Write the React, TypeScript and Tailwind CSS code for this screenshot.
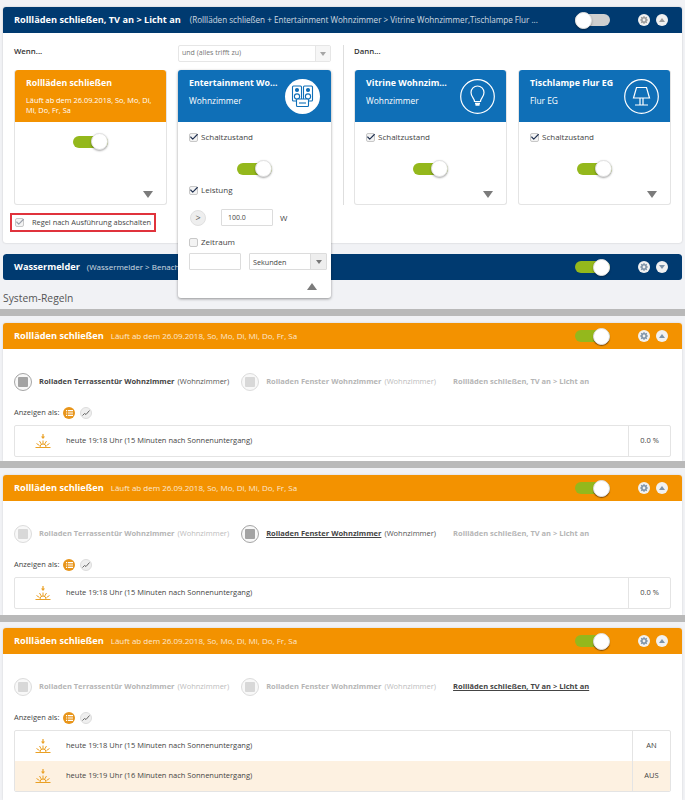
import React from 'react';
import { Check } from 'lucide-react';

const Toggle = ({ on = true, dark = false }: { on?: boolean; dark?: boolean }) => (
  <div className="relative w-[35px] h-[15px] flex items-center">
    <div className={`w-full h-[12px] rounded-full ${on ? 'bg-[#94b81c]' : 'bg-[#cfcfcf]'}`} />
    <div
      className={`absolute top-[-1px] ${on ? 'right-0' : 'left-0'} w-[17px] h-[17px] rounded-full bg-white border border-[#e2e2e2] ${dark ? 'shadow-[0_1px_1px_rgba(60,30,0,0.6)]' : 'shadow-[0_1px_2px_rgba(0,0,0,0.35)]'}`}
    />
  </div>
);

const Gear = ({ color }: { color: string }) => (
  <div className="w-[12px] h-[12px] rounded-full bg-[#f1f1f1] flex items-center justify-center">
    <svg width="8" height="8" viewBox="0 0 8 8">
      <circle cx="4" cy="4" r="2.2" fill="none" stroke={color} strokeWidth="1.6" />
      <g stroke={color} strokeWidth="1.1">
        <path d="M4 0v1.4M4 6.6V8M0 4h1.4M6.6 4H8M1.2 1.2l1 1M5.8 5.8l1 1M1.2 6.8l1-1M5.8 2.2l1-1" />
      </g>
    </svg>
  </div>
);

const Arrow = ({ up = true, color }: { up?: boolean; color: string }) => (
  <div className="w-[12px] h-[12px] rounded-full bg-[#f1f1f1] flex items-center justify-center">
    <svg width="6" height="4" viewBox="0 0 6 4">
      <path d={up ? 'M3 0l3 4H0z' : 'M3 4L0 0h6z'} fill={color} />
    </svg>
  </div>
);

const Caret = ({ up = false }: { up?: boolean }) => (
  <svg width="10" height="7" viewBox="0 0 10 7">
    <path d={up ? 'M5 0l5 7H0z' : 'M5 7L0 0h10z'} fill="#7b7b7b" />
  </svg>
);

const SelectArrow = ({ color }: { color: string }) => (
  <svg width="6" height="4" viewBox="0 0 6 4">
    <path d="M3 4L0 0h6z" fill={color} />
  </svg>
);

const Box = ({ checked = true, faded = false }: { checked?: boolean; faded?: boolean }) => (
  <div className="relative w-[9px] h-[9px] rounded-[2px] border border-[#c8c8c8] bg-[#f3f3f3] shrink-0">
    {checked && (
      <Check
        size={10}
        strokeWidth={2.6}
        className={`absolute left-[-1px] top-[-2px] ${faded ? 'text-[#9aa0aa]' : 'text-[#1f3050]'}`}
      />
    )}
  </div>
);

const PanelHead = ({
  bg,
  title,
  sub,
  subClass = 'ml-[7px] text-[8px]',
  on = true,
  up = true,
  iconColor,
  shadow = false,
}: {
  bg: string;
  title: string;
  sub: string;
  subClass?: string;
  on?: boolean;
  up?: boolean;
  iconColor: string;
  shadow?: boolean;
}) => (
  <div className={`h-[26px] rounded-t-[3px] flex items-center pl-[11px] pr-[14px] text-white ${bg}`}>
    <span className="text-[9.2px] font-bold whitespace-nowrap">{title}</span>
    <span className={`flex-1 opacity-80 whitespace-nowrap ${subClass}`}>{sub}</span>
    <Toggle on={on} dark={shadow} />
    <div className="ml-[28px] flex gap-[6px]">
      <Gear color={iconColor} />
      <Arrow up={up} color={iconColor} />
    </div>
  </div>
);

const LightIcon = () => (
  <svg width="35" height="35" viewBox="0 0 35 35" fill="none" stroke="white" strokeWidth="1.2">
    <circle cx="17.5" cy="17.5" r="16.8" />
    <path d="M14.5 22.5c0-3-3.5-4.5-3.500-9a6.500 6.500 0 0 1 13 0c0 4.500-3.500 6-3.500 9z" />
    <path d="M15 24.500h5M15.500 26h4" strokeWidth="1.500" />
  </svg>
);

const LampIcon = () => (
  <svg width="35" height="35" viewBox="0 0 35 35" fill="none" stroke="white" strokeWidth="1.2">
    <circle cx="17.5" cy="17.5" r="16.8" />
    <path d="M12.500 8.500h10l3 10.500h-16z" />
    <path d="M16 19v6.500M19 19v6.500M11 26h13" />
  </svg>
);

const AvIcon = () => (
  <div className="w-[35px] h-[35px] rounded-full bg-white flex items-center justify-center">
    <svg width="25" height="25" viewBox="0 0 25 25" fill="none" stroke="#0f6fb7" strokeWidth="1.100">
      <rect x="2.500" y="2" width="9" height="15" rx="1" />
      <rect x="13.500" y="2" width="9" height="15" rx="1" />
      <circle cx="7" cy="6" r="1.500" fill="#0f6fb7" />
      <circle cx="18" cy="6" r="1.500" fill="#0f6fb7" />
      <circle cx="7" cy="12.500" r="2.600" />
      <circle cx="18" cy="12.500" r="2.600" />
      <rect x="6.500" y="15" width="12" height="7.500" rx="1" fill="white" />
      <path d="M9 19h7" />
    </svg>
  </div>
);

const CardHead = ({
  bg,
  title,
  sub,
  icon,
}: {
  bg: string;
  title: string;
  sub: React.ReactNode;
  icon?: React.ReactNode;
}) => (
  <div className={`h-[52px] rounded-t-[3px] pl-[11px] pr-[11px] pt-[5px] text-white relative ${bg}`}>
    <div className="text-[8.8px] font-bold leading-[16px] whitespace-nowrap">{title}</div>
    {sub}
    {icon && <div className="absolute right-[11px] top-[9px]">{icon}</div>}
  </div>
);

const RoomLine = ({ text }: { text: string }) => (
  <div className="mt-[4px] text-[8.4px] font-medium leading-[12px]">{text}</div>
);

const ActorCard = ({ title, room, icon }: { title: string; room: string; icon: React.ReactNode }) => (
  <div className="w-[153px] h-[135px] rounded-[3px] bg-white border border-[#e4e4e4] border-t-0 flex flex-col">
    <CardHead bg="bg-[#0f6fb7]" title={title} sub={<RoomLine text={room} />} icon={icon} />
    <div className="flex-1 px-[11px] pt-[9px] relative">
      <div className="flex items-center gap-[3px] text-[8px] text-[#444] leading-[12px]">
        <Box /> Schaltzustand
      </div>
      <div className="flex justify-center mt-[18px]">
        <Toggle />
      </div>
      <div className="absolute right-[13px] bottom-[6px] flex">
        <Caret />
      </div>
    </div>
  </div>
);

const RuleOne = () => (
  <div className="rounded-[3px] bg-white shadow-[0_0_2px_rgba(0,0,0,0.2)]">
    <PanelHead
      bg="bg-[#003a70]"
      title="Rollläden schließen, TV an > Licht an"
      sub="(Rollläden schließen + Entertainment Wohnzimmer > Vitrine Wohnzimmer,Tischlampe Flur ..."
      subClass="ml-[9px] text-[8.1px]"
      on={false}
      iconColor="#9b9b9b"
    />
    <div className="h-[210px] px-[11px] pt-[12px] flex">
      <div className="w-[153px]">
        <div className="h-[25px] text-[7.8px] font-semibold text-[#333] leading-[12px]">Wenn...</div>
        <div className="h-[135px] rounded-[3px] bg-white border border-[#e4e4e4] border-t-0 flex flex-col">
          <CardHead
            bg="bg-[#f39200]"
            title="Rollläden schließen"
            sub={
              <div className="mt-[4px] text-[7.4px] leading-[10px] font-medium whitespace-nowrap">
                Läuft ab dem 26.09.2018, So, Mo, Di,
                <br />
                Mi, Do, Fr, Sa
              </div>
            }
          />
          <div className="flex-1 relative pt-[12px] flex justify-center">
            <Toggle />
            <div className="absolute right-[13px] bottom-[6px] flex">
              <Caret />
            </div>
          </div>
        </div>
        <div className="-ml-[4px] mt-[8px] w-[146px] h-[19px] border-2 border-[#e0333c] flex items-center pl-[3px] gap-[8px] text-[7.4px] text-[#444] whitespace-nowrap">
          <Box faded /> Regel nach Ausführung abschalten
        </div>
      </div>

      <div className="ml-[11px] w-[153px] relative">
        <div className="h-[17px] mb-[8px] rounded-[2px] border border-[#e6e6e6] flex items-center justify-between pl-[3px] text-[7px] text-[#777]">
          und (alles trifft zu)
          <div className="w-[15px] h-full border-l border-[#e6e6e6] bg-[#f6f6f6] flex items-center justify-center">
            <SelectArrow color="#a5a5a5" />
          </div>
        </div>
        <div className="absolute z-10 top-[25px] left-0 w-[153px] h-[228px] rounded-[3px] bg-white shadow-[0_1px_3px_rgba(0,0,0,0.4)]">
          <CardHead
            bg="bg-[#0f6fb7]"
            title="Entertainment Wo..."
            sub={<RoomLine text="Wohnzimmer" />}
            icon={<AvIcon />}
          />
          <div className="px-[11px] pt-[9px] text-[8px] text-[#444] leading-[12px]">
            <div className="flex items-center gap-[3px]">
              <Box /> Schaltzustand
            </div>
            <div className="flex justify-center mt-[18px]">
              <Toggle />
            </div>
            <div className="flex items-center gap-[3px] mt-[8px]">
              <Box /> Leistung
            </div>
            <div className="flex items-center mt-[13px] h-[17px]">
              <div className="ml-px w-[16px] h-[16px] rounded-full bg-[#eeeeee] border border-[#e0e0e0] flex items-center justify-center text-[9px] text-[#555]">
                &gt;
              </div>
              <div className="ml-[15px] w-[52px] h-[17px] border border-[#dcdcdc] rounded-[1px] pl-[6px] text-[7px] text-[#444] flex items-center">
                100.0
              </div>
              <span className="ml-[7px] text-[8px]">W</span>
            </div>
            <div className="flex items-center gap-[3px] mt-[10px]">
              <Box checked={false} /> Zeitraum
            </div>
            <div className="flex items-center mt-[5px]">
              <div className="shrink-0 w-[52px] h-[17px] border border-[#dcdcdc] rounded-[1px]" />
              <div className="shrink-0 ml-[8px] w-[78px] h-[17px] border border-[#dcdcdc] rounded-[1px] flex items-center justify-between pl-[3px] text-[7.200px]">
                Sekunden
                <div className="w-[16px] h-full border-l border-[#dcdcdc] bg-[#eeeeee] flex items-center justify-center">
                  <SelectArrow color="#777777" />
                </div>
              </div>
            </div>
            <div className="flex justify-end mt-[13px] pr-[3px]">
              <Caret up />
            </div>
          </div>
        </div>
      </div>

      <div className="ml-[12px] w-px h-[160px] bg-[#dedede]" />

      <div className="ml-[10px]">
        <div className="h-[25px] text-[7.8px] font-semibold text-[#333] leading-[12px]">Dann...</div>
        <div className="flex gap-[11px]">
          <ActorCard title="Vitrine Wohnzim..." room="Wohnzimmer" icon={<LightIcon />} />
          <ActorCard title="Tischlampe Flur EG" room="Flur EG" icon={<LampIcon />} />
        </div>
      </div>
    </div>
  </div>
);

const Blind = ({ active }: { active: boolean }) => (
  <div
    className={`w-[18px] h-[18px] rounded-full flex items-center justify-center border ${active ? 'border-[#a5a5a5] bg-[#f8f8f8]' : 'border-[#dcdcdc] bg-[#f8f8f8]'}`}
  >
    <div className={`w-[10px] h-[10px] rounded-[1px] ${active ? 'bg-[#a3a3a3]' : 'bg-[#d8d8d8]'}`} />
  </div>
);

const DeviceRow = ({ active }: { active: number }) => {
  const strong = 'font-bold text-[#444] text-[7.5px]';
  const faint = 'font-bold text-[#b5b5b5] text-[7.5px]';
  const tail = (on: boolean) => `font-normal ${on ? 'text-[#555]' : 'text-[#bcbcbc]'}`;
  return (
    <div className="flex items-center h-[18px] whitespace-nowrap">
      <Blind active={active === 0} />
      <span className={`ml-[7px] ${active === 0 ? strong : faint}`}>Rolladen Terrassentür Wohnzimmer</span>
      <span className={`ml-[3px] text-[7.5px] ${tail(active === 0)}`}>(Wohnzimmer)</span>
      <div className="w-[12px]" />
      <Blind active={active === 1} />
      <span className={`ml-[7px] ${active === 1 ? `${strong} underline` : faint}`}>Rolladen Fenster Wohnzimmer</span>
      <span className={`ml-[3px] text-[7.5px] ${tail(active === 1)}`}>(Wohnzimmer)</span>
      <span className={`ml-[17px] ${active === 2 ? `${strong} underline` : faint}`}>
        Rollläden schließen, TV an &gt; Licht an
      </span>
    </div>
  );
};

const Sunset = () => (
  <svg width="16" height="15" viewBox="0 0 16 15" fill="none" stroke="#eaa024" strokeWidth="1">
    <path d="M8 0v3" strokeWidth="1.200" />
    <path d="M6 2.500L8 5l2-2.500z" fill="#eaa024" stroke="none" />
    <path d="M8 6.500v3.500M4.500 7l1.800 3M11.500 7l-1.800 3M1.500 9.500l3 2M14.500 9.500l-3 2" />
    <path d="M5 13a3 3 0 0 1 6 0" />
    <path d="M0.500 13.500h15" strokeWidth="1.200" />
  </svg>
);

const ListRow = ({ text, value, width, tint }: { text: string; value: string; width: string; tint?: boolean }) => (
  <div className={`h-[30px] flex items-center text-[7.500px] text-[#444] ${tint ? 'bg-[#fdf1e1]' : ''}`}>
    <div className="w-[51px] flex justify-center pl-[4px]">
      <Sunset />
    </div>
    <div className="flex-1 whitespace-nowrap">{text}</div>
    <div className={`h-full border-l border-[#e4e4e4] flex items-center justify-center ${width}`}>{value}</div>
  </div>
);

const SystemRule = ({
  active,
  rows,
  cell,
  spacing,
}: {
  active: number;
  rows: { text: string; value: string }[];
  cell: string;
  spacing: string;
}) => (
  <div className={`mx-[3px] rounded-t-[3px] bg-white shadow-[0_0_2px_rgba(0,0,0,0.15)] ${spacing}`}>
    <PanelHead
      bg="bg-[#f39200]"
      title="Rollläden schließen"
      sub="Läuft ab dem 26.09.2018, So, Mo, Di, Mi, Do, Fr, Sa"
      iconColor="#7d93a8"
      shadow
    />
    <div className="px-[11px] pt-[24px]">
      <DeviceRow active={active} />
      <div className="mt-[15px] h-[14px] flex items-center text-[7.500px] text-[#444]">
        Anzeigen als:
        <div className="ml-[4px] w-[12px] h-[12px] rounded-full bg-[#e8951a] flex items-center justify-center">
          <svg width="7" height="6" viewBox="0 0 7 6" fill="white">
            <path d="M0 0h1.200v1.200H0zM2 0h5v1.200H2zM0 2.400h1.200v1.200H0zM2 2.400h5v1.200H2zM0 4.800h1.200V6H0zM2 4.800h5V6H2z" />
          </svg>
        </div>
        <div className="ml-[5px] w-[12px] h-[12px] rounded-full bg-[#efefef] border border-[#dddddd] flex items-center justify-center">
          <svg width="8" height="6" viewBox="0 0 8 6" fill="none" stroke="#666" strokeWidth="1">
            <path d="M0.500 5.500l2-2 1.500 1L7.500 0.500" />
          </svg>
        </div>
      </div>
      <div className="mt-[5px] rounded-[2px] border border-[#e4e4e4] overflow-hidden">
        {rows.map((r, i) => (
          <ListRow key={r.value} text={r.text} value={r.value} width={cell} tint={i === 1} />
        ))}
      </div>
    </div>
  </div>
);

const one = [{ text: 'heute 19:18 Uhr (15 Minuten nach Sonnenuntergang)', value: '0.0 %' }];
const two = [
  { text: 'heute 19:18 Uhr (15 Minuten nach Sonnenuntergang)', value: 'AN' },
  { text: 'heute 19:19 Uhr (16 Minuten nach Sonnenuntergang)', value: 'AUS' },
];

const Separator = () => <div className="h-[7px] bg-[#b9b9b9]" />;

export default function App() {
  return (
    <div className="w-[685px] h-[800px] overflow-hidden bg-[#f1f2f5] font-['Open_Sans',sans-serif] pt-[7px]">
      <div className="mx-[3px]">
        <RuleOne />
      </div>
      <div className="mx-[3px] mt-[11px] rounded-[3px] overflow-hidden">
        <PanelHead
          bg="bg-[#003a70]"
          title="Wassermelder"
          sub="(Wassermelder > Benachrichtigung)"
          up={false}
          iconColor="#7d93a8"
        />
      </div>
      <div className="mt-[10px] h-[16px] pl-[3px] text-[10.300px] leading-[16px] text-[#555]">System-Regeln</div>
      <div className="mt-[3px]">
        <Separator />
      </div>
      <SystemRule active={0} rows={one} cell="w-[42px]" spacing="mt-[7px] h-[138px]" />
      <Separator />
      <SystemRule active={1} rows={one} cell="w-[42px]" spacing="mt-[7px] h-[140px]" />
      <Separator />
      <SystemRule active={2} rows={two} cell="w-[38px]" spacing="mt-[6px] h-[172px]" />
    </div>
  );
}
